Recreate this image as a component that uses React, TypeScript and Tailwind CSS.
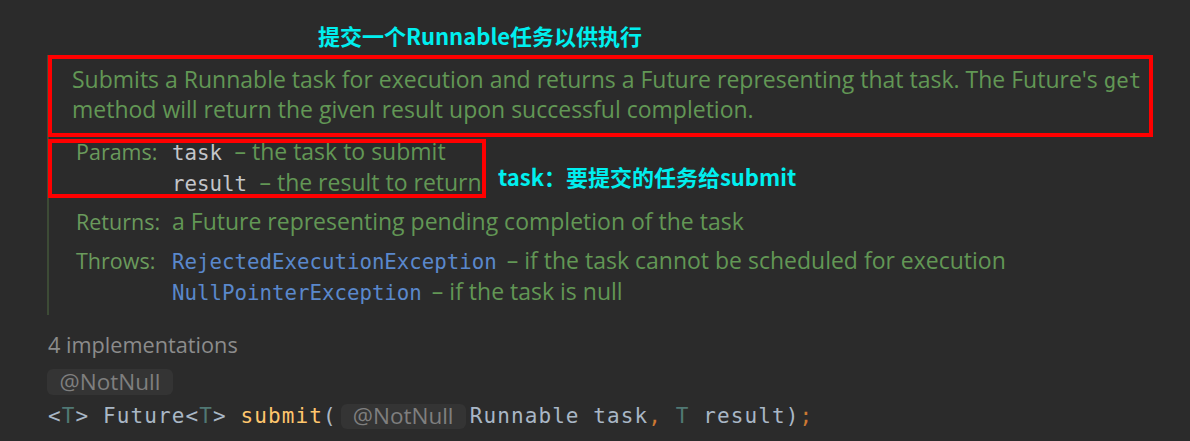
import React from "react";

const sans = { fontFamily: '"Open Sans", "Noto Sans", sans-serif' } as const;
const mono = { fontFamily: '"DejaVu Sans Mono", "Liberation Mono", monospace' } as const;
const cjk = { fontFamily: '"Noto Sans CJK SC", "Noto Sans", sans-serif' } as const;

function Code({ children, color }: { children: React.ReactNode; color: string }) {
  return (
    <span className={`text-[20.75px] ${color}`} style={mono}>
      {children}
    </span>
  );
}

export default function App() {
  return (
    <div className="relative w-[1190px] h-[441px] overflow-hidden bg-[#2b2b2b]" style={sans}>
      {/* annotation title */}
      <div className="h-[55px] pl-[318px] pt-[22px]">
        <div className="text-[22px] leading-[26px] font-bold text-[#00efef] whitespace-nowrap" style={cjk}>
          提交一个Runnable任务以供执行
        </div>
      </div>

      {/* doc block */}
      <div className="ml-[47px] h-[260px] border-l-2 border-[#3d4b36] pt-[9px] text-[23px] text-[#629755]">
        <div className="pl-[23px] leading-[30px] whitespace-nowrap">
          <div className="h-[30px]">
            Submits a Runnable task for execution and returns a Future representing that task. The Future's{" "}
            <Code color="text-[#629755]">get</Code>
          </div>
          <div className="h-[30px]">method will return the given result upon successful completion.</div>
        </div>

        <div className="mt-[11.5px] pl-[27px] leading-[31px] whitespace-nowrap">
          <div className="flex">
            <div className="w-[96px] text-[21.5px] text-[#6a9a5c]">Params:</div>
            <div className="flex flex-col">
              <div className="h-[31px]">
                <Code color="text-[#c4c6ca]">task </Code>– the task to submit
              </div>
              <div className="h-[31px]">
                <Code color="text-[#c4c6ca]">result </Code>– the result to return
              </div>
            </div>
          </div>
          <div className="flex h-[31px] mt-[8px]">
            <div className="w-[96px] text-[21.5px] text-[#6a9a5c]">Returns:</div>
            <div>a Future representing pending completion of the task</div>
          </div>
          <div className="flex mt-[8px]">
            <div className="w-[96px] text-[21.5px] text-[#6a9a5c]">Throws:</div>
            <div className="flex flex-col">
              <div className="h-[31px]">
                <Code color="text-[#5a88cc]">RejectedExecutionException</Code>
                <span className="ml-[10px]">– if the task cannot be scheduled for execution</span>
              </div>
              <div className="h-[31px]">
                <Code color="text-[#5a88cc]">NullPointerException</Code>
                <span className="ml-[10px]">– if the task is null</span>
              </div>
            </div>
          </div>
        </div>
      </div>

      {/* implementations */}
      <div className="mt-[15px] pl-[48px] text-[21.7px] leading-[30px] text-[#8c8c8c] whitespace-nowrap">
        4 implementations
      </div>

      <div className="mt-[9px] pl-[47px] flex">
        <div className="h-[26px] w-[126px] flex items-center justify-center rounded-[6px] bg-[#343434] text-[22.5px] text-[#7f7f7f]">
          @NotNull
        </div>
      </div>

      <div className="mt-[8px] pl-[48px] flex items-center whitespace-nowrap text-[21px] leading-[26px] tracking-[1.1px] text-[#a9b7c6]" style={mono}>
        <span>&lt;<span className="text-[#507874]">T</span>&gt; Future&lt;<span className="text-[#507874]">T</span>&gt; <span className="text-[#ffc66d]">submit</span>(</span>
        <span
          className="mx-[4px] h-[25px] w-[125px] flex items-center justify-center rounded-[6px] bg-[#343434] text-[22.5px] tracking-normal text-[#7f7f7f]"
          style={sans}
        >
          @NotNull
        </span>
        <span>
          Runnable task<span className="text-[#cc7832]">,</span> <span className="text-[#507874]">T</span> result)<span className="text-[#cc7832]">;</span>
        </span>
      </div>

      {/* red annotation boxes */}
      <div className="absolute left-[48px] top-[55px] w-[1105px] h-[82px] border-[4px] border-[#ff0000]" />
      <div className="absolute left-[48px] top-[139px] w-[438px] h-[59px] border-[4px] border-[#ff0000]" />

      <div
        className="absolute left-[498px] top-[163px] text-[22px] leading-[26px] font-bold text-[#00efef] whitespace-nowrap"
        style={cjk}
      >
        task：要提交的任务给submit
      </div>
    </div>
  );
}
